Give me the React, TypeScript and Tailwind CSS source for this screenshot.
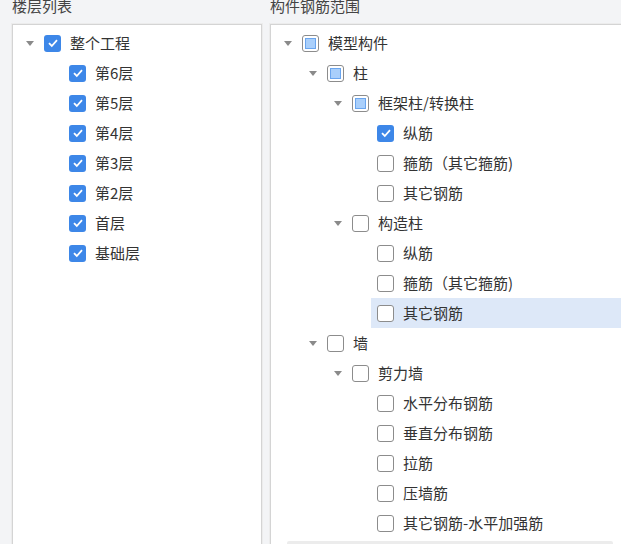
import React from 'react';

type State = 'checked' | 'partial' | 'none';

interface Node {
  label: string;
  level: number;
  state: State;
  expandable?: boolean;
  selected?: boolean;
}

const floors: Node[] = [
  { label: '整个工程', level: 0, state: 'checked', expandable: true },
  { label: '第6层', level: 1, state: 'checked' },
  { label: '第5层', level: 1, state: 'checked' },
  { label: '第4层', level: 1, state: 'checked' },
  { label: '第3层', level: 1, state: 'checked' },
  { label: '第2层', level: 1, state: 'checked' },
  { label: '首层', level: 1, state: 'checked' },
  { label: '基础层', level: 1, state: 'checked' },
];

const parts: Node[] = [
  { label: '模型构件', level: 0, state: 'partial', expandable: true },
  { label: '柱', level: 1, state: 'partial', expandable: true },
  { label: '框架柱/转换柱', level: 2, state: 'partial', expandable: true },
  { label: '纵筋', level: 3, state: 'checked' },
  { label: '箍筋（其它箍筋)', level: 3, state: 'none' },
  { label: '其它钢筋', level: 3, state: 'none' },
  { label: '构造柱', level: 2, state: 'none', expandable: true },
  { label: '纵筋', level: 3, state: 'none' },
  { label: '箍筋（其它箍筋)', level: 3, state: 'none' },
  { label: '其它钢筋', level: 3, state: 'none', selected: true },
  { label: '墙', level: 1, state: 'none', expandable: true },
  { label: '剪力墙', level: 2, state: 'none', expandable: true },
  { label: '水平分布钢筋', level: 3, state: 'none' },
  { label: '垂直分布钢筋', level: 3, state: 'none' },
  { label: '拉筋', level: 3, state: 'none' },
  { label: '压墙筋', level: 3, state: 'none' },
  { label: '其它钢筋-水平加强筋', level: 3, state: 'none' },
];

const indent = ['pl-[13px]', 'pl-[38px]', 'pl-[63px]', 'pl-[88px]'];

const Box = ({ state }: { state: State }) => {
  if (state === 'checked') {
    return (
      <span className="w-[17px] h-[17px] shrink-0 rounded-[3px] bg-[#3d87e8] flex items-center justify-center">
        <svg width="12" height="12" viewBox="0 0 12 12">
          <path d="M2 6.2 L4.8 9 L10 3.2" fill="none" stroke="#fff" strokeWidth="1.8" />
        </svg>
      </span>
    );
  }
  if (state === 'partial') {
    return (
      <span className="w-[17px] h-[17px] shrink-0 rounded-[3px] border border-[#8c8c8c] bg-white flex items-center justify-center">
        <span className="w-[11px] h-[11px] bg-[#a9cffb] border border-[#6aa5ee]" />
      </span>
    );
  }
  return <span className="w-[17px] h-[17px] shrink-0 rounded-[3px] border border-[#8c8c8c] bg-white" />;
};

const Row = ({ node }: { node: Node }) => (
  <div className={`h-[30px] flex items-center ${indent[node.level]}`}>
    <span className="w-[18px] shrink-0 flex justify-start">
      {node.expandable && (
        <svg width="8" height="5" viewBox="0 0 8 5">
          <path d="M0 0 L8 0 L4 5 Z" fill="#8a8a8a" />
        </svg>
      )}
    </span>
    <Box state={node.state} />
    <span className="ml-[9px] whitespace-nowrap">{node.label}</span>
  </div>
);

export default function App() {
  return (
    <div
      className="w-[621px] h-[544px] overflow-hidden bg-[#f3f4f6] text-[15px] text-[#333]"
      style={{ fontFamily: '"Noto Sans CJK SC", "Noto Sans", sans-serif' }}
    >
      <div className="flex gap-[8px] pl-[12px]">
        <div className="w-[250px] shrink-0">
          <div className="h-[30px] -mt-[6px] leading-[24px] text-[#444]">楼层列表</div>
          <div className="h-[540px] bg-white border border-[#d4d4d4] shadow-[0_0_0_1px_#ececec] pt-[3px]">
            {floors.map((n, i) => (
              <Row key={i} node={n} />
            ))}
          </div>
        </div>
        <div className="w-[370px] shrink-0">
          <div className="h-[30px] -mt-[6px] leading-[24px] text-[#444]">构件钢筋范围</div>
          <div className="h-[540px] bg-white border border-[#d4d4d4] shadow-[0_0_0_1px_#ececec] pt-[3px] relative">
            {parts.map((n, i) =>
              n.selected ? (
                <div key={i} className="pl-[100px]">
                  <div className="h-[30px] flex items-center bg-[#dde8f8] pl-[6px]">
                    <Box state={n.state} />
                    <span className="ml-[9px] whitespace-nowrap">{n.label}</span>
                  </div>
                </div>
              ) : (
                <Row key={i} node={n} />
              )
            )}
            <div className="absolute left-[16px] top-[516px] w-[326px] h-[6px] bg-[#ececec] rounded-[2px]" />
          </div>
        </div>
      </div>
    </div>
  );
}
